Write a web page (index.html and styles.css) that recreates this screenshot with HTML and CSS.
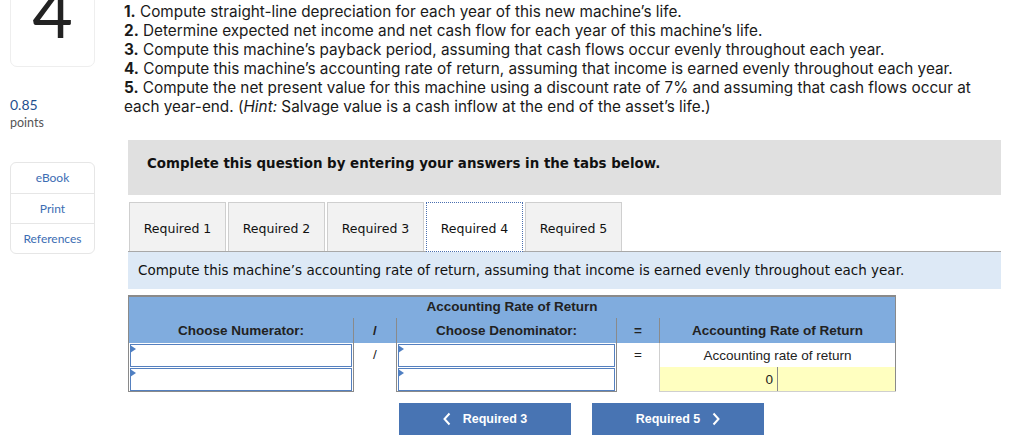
FILE: index.html
```html
<!DOCTYPE html>
<html>
<head>
<meta charset="utf-8">
<link rel="stylesheet" href="styles.css">
</head>
<body>
<div class="page">
  <aside class="side">
    <div class="qnum">4</div>
    <div class="score">
      <div class="pts">0.85</div>
      <div class="lbl">points</div>
    </div>
    <div class="tools">
      <div class="tool">eBook</div>
      <div class="tool">Print</div>
      <div class="tool">References</div>
    </div>
  </aside>
  <main class="main">
    <div class="reqs">
      <p><b>1.</b> Compute straight-line depreciation for each year of this new machine’s life.</p>
      <p><b>2.</b> Determine expected net income and net cash flow for each year of this machine’s life.</p>
      <p><b>3.</b> Compute this machine’s payback period, assuming that cash flows occur evenly throughout each year.</p>
      <p><b>4.</b> Compute this machine’s accounting rate of return, assuming that income is earned evenly throughout each year.</p>
      <p><b>5.</b> Compute the net present value for this machine using a discount rate of 7% and assuming that cash flows occur at each year-end. (<i>Hint:</i> Salvage value is a cash inflow at the end of the asset’s life.)</p>
    </div>
    <div class="notice">Complete this question by entering your answers in the tabs below.</div>
    <div class="tabs">
      <div class="tab">Required 1</div>
      <div class="tab">Required 2</div>
      <div class="tab">Required 3</div>
      <div class="tab active">Required 4</div>
      <div class="tab">Required 5</div>
    </div>
    <div class="instr">Compute this machine’s accounting rate of return, assuming that income is earned evenly throughout each year.</div>
    <table class="art">
      <colgroup>
        <col class="c-num"><col class="c-op"><col class="c-den"><col class="c-op"><col class="c-res"><col class="c-res">
      </colgroup>
      <tr class="h1"><th colspan="6">Accounting Rate of Return</th></tr>
      <tr class="h2">
        <th>Choose Numerator:</th>
        <th class="sep">/</th>
        <th class="sep">Choose Denominator:</th>
        <th class="sep">=</th>
        <th class="sep" colspan="2">Accounting Rate of Return</th>
      </tr>
      <tr class="row">
        <td class="inp"><div class="box"></div></td>
        <td class="sep op">/</td>
        <td class="sep inp"><div class="box"></div></td>
        <td class="sep op">=</td>
        <td class="sep2 lab" colspan="2">Accounting rate of return</td>
      </tr>
      <tr class="row last">
        <td class="inp"><div class="box"></div></td>
        <td class="sep op"></td>
        <td class="sep inp"><div class="box"></div></td>
        <td class="sep op"></td>
        <td class="sep2 val">0</td>
        <td class="val2"></td>
      </tr>
    </table>
    <div class="nav">
      <div class="btn">
        <svg width="8" height="14" viewBox="0 0 8 14"><polyline points="6.5,1.5 1.5,7 6.5,12.5" fill="none" stroke="#fff" stroke-width="2"/></svg>
        <span>Required 3</span>
      </div>
      <div class="btn">
        <span>Required 5</span>
        <svg width="8" height="14" viewBox="0 0 8 14"><polyline points="1.5,1.5 6.5,7 1.5,12.5" fill="none" stroke="#fff" stroke-width="2"/></svg>
      </div>
    </div>
  </main>
</div>
</body>
</html>
```
FILE: styles.css
```css
* { box-sizing: border-box; }
html, body { margin: 0; padding: 0; background: #fff; }
body { font-family: "Inter", "Liberation Sans", sans-serif; color: #1a1a1a; overflow: hidden; }

.page { display: flex; padding-left: 10px; }

.side { width: 85px; flex: none; margin-top: -30px; }
.qnum {
  height: 97px;
  border: 1px solid #eeeeee;
  border-radius: 7px;
  display: flex; align-items: flex-end; justify-content: center;
  font-family: "Lato", sans-serif;
  font-size: 70px; line-height: 1; color: #222;
  padding-bottom: 20px;
  font-weight: 400;
}
.score { margin-top: 29px; font-family: "Lato", sans-serif; }
.pts { font-size: 14px; color: #1f4f8f; line-height: 18px; }
.lbl { font-size: 12.5px; color: #555; line-height: 18px; }
.tools {
  margin-top: 30px;
  border: 1px solid #e6e6e6;
  border-radius: 6px;
  font-family: "Lato", sans-serif;
}
.tool {
  font-size: 12px; color: #3c6db3; text-align: center;
  line-height: 29px; height: 30px;
}
.tool + .tool { border-top: 1px solid #e6e6e6; }

.main { margin-left: 29px; width: 877px; }

.reqs { margin-top: 2px; }
.reqs p { margin: 0; font-size: 15.3px; line-height: 19px; }
.reqs b { font-weight: 700; }

.notice {
  margin-left: 4px; margin-top: 24px;
  background: #e0e0e0; height: 55px;
  padding: 16px 0 0 19px;
  font-family: "DejaVu Sans", Verdana, sans-serif; font-weight: bold;
  font-size: 13.4px; color: #111;
}

.tabs { margin-left: 4px; margin-top: 7px; display: flex; gap: 2px; padding-left: 1px;
  border-bottom: 1px solid #a8a8a8; height: 50px; }
.tab {
  width: 97px; height: 49px;
  background: #f2f2f2; border: 1px solid #cfcfcf; border-bottom: none;
  display: flex; align-items: center; justify-content: center;
  font-family: "DejaVu Sans", Verdana, sans-serif; font-size: 12.5px; color: #111;
  padding-top: 2px;
}
.tab.active { background: #fff; border: 1px dotted #4a6fb0; border-bottom: 1px dotted #4a6fb0; height: 50px; margin-bottom: -1px; }

.instr {
  margin-left: 4px;
  background: #dde9f6; height: 37px;
  padding: 10px 0 0 10px;
  font-family: "DejaVu Sans", Verdana, sans-serif; font-size: 13.5px; color: #111;
}

.art {
  margin-left: 4px; margin-top: 6px;
  border-collapse: collapse; table-layout: fixed;
  width: 768px;
  font-family: "Liberation Sans", Arial, sans-serif; font-size: 13.5px; color: #222;
}
.c-num { width: 225px; }
.c-op { width: 43px; }
.c-den { width: 220px; }
.c-res { width: 118px; }
.art th, .art td { padding: 0; }
.art tr.h1 th { background: #80acde; height: 22px; border-top: 2px solid #8a8a8a; border-left: 1px solid #8a8a8a; border-right: 1px solid #8a8a8a; font-weight: bold; vertical-align: bottom; padding-bottom: 4px; }
.art tr.h2 th { background: #80acde; height: 25px; font-weight: bold; border-left: 1px solid #8a8a8a; border-right: 1px solid #8a8a8a; }
.art tr.row td { height: 24px; text-align: center; }
.art tr.row td:first-child { border-left: 1px solid #8a8a8a; }
.art td.sep { border-left: 1px solid #8a8a8a; }
.art td.sep2 { border-left: 1px solid #cfcfcf; }
.art td.inp { padding: 1px 1px 0 1px; vertical-align: top; }
.art tr.last td.inp { border-bottom: 1px solid #8a8a8a; padding-bottom: 0; }
.box {
  position: relative;
  height: 23px; border: 1.5px solid #5580bf; background: #fff;
}
.box::before {
  content: ""; position: absolute; left: -1px; top: 0;
  border-left: 6px solid #4f7fc2; border-top: 4px solid transparent; border-bottom: 4px solid transparent;
}
.art td.op { vertical-align: top; padding-top: 4px; }
.art td.lab { border-right: 1px solid #8a8a8a; }
.art tr.row td.val { background: #ffffc0; text-align: right; padding-right: 4px; border-bottom: 1px solid #cfcfcf; }
.art tr.row td.val2 { background: #ffffc0; border-left: 1px solid #8a8a8a; border-right: 1px solid #8a8a8a; border-bottom: 1px solid #cfcfcf; }

.nav { margin-left: 275px; margin-top: 11px; display: flex; gap: 21px; }
.btn {
  width: 172px; height: 32px; background: #4874b3;
  display: flex; align-items: center; justify-content: center; gap: 12px;
  color: #fff; font-family: "Liberation Sans", Arial, sans-serif; font-weight: bold; font-size: 12.5px;
}
.btn svg { display: block; }
```
